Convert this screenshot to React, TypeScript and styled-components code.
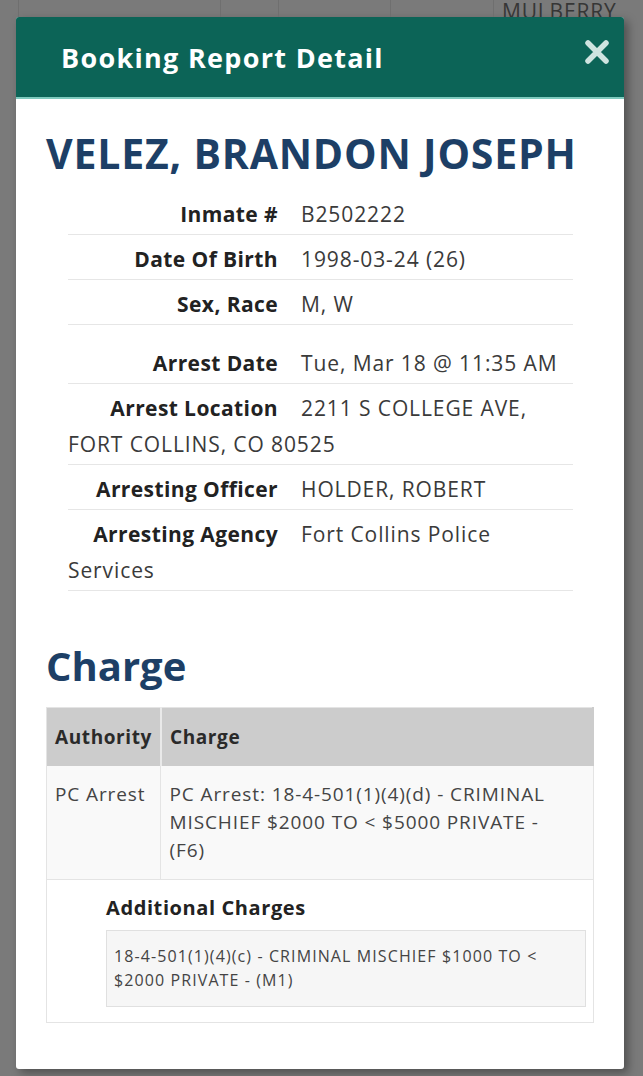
import React from "react";
import styled, { createGlobalStyle } from "styled-components";

const GlobalStyle = createGlobalStyle`
  html, body {
    margin: 0;
    padding: 0;
    background: #7a7a7a;
  }
  body {
    font-family: "Open Sans", "Liberation Sans", sans-serif;
  }
`;

interface IDetailRow {
  label: string;
  value: string;
}

const personRows: IDetailRow[] = [
  { label: "Inmate #", value: "B2502222" },
  { label: "Date Of Birth", value: "1998-03-24 (26)" },
  { label: "Sex, Race", value: "M, W" },
];

const arrestRows: IDetailRow[] = [
  { label: "Arrest Date", value: "Tue, Mar 18 @ 11:35 AM" },
  { label: "Arrest Location", value: "2211 S COLLEGE AVE, FORT COLLINS, CO 80525" },
  { label: "Arresting Officer", value: "HOLDER, ROBERT" },
  { label: "Arresting Agency", value: "Fort Collins Police Services" },
];

const CloseIcon = () => (
  <svg width="26" height="24" viewBox="0 0 26 24" aria-hidden="true">
    <path
      d="M4 3 L22 21 M22 3 L4 21"
      stroke="#cfe4e0"
      strokeWidth="5.5"
      strokeLinecap="round"
    />
  </svg>
);

const App = () => {
  return (
    <Page>
      <GlobalStyle />
      <Backdrop>
        <BackCell $width={19} />
        <BackCell $width={202} />
        <BackCell $width={58} />
        <BackCell $width={112} />
        <BackCell $width={103} />
        <BackCell $width={149}>
          <BackText>MULBERRY</BackText>
        </BackCell>
      </Backdrop>
      <Modal>
        <Header>
          <HeaderTitle>Booking Report Detail</HeaderTitle>
          <CloseButton aria-label="Close">
            <CloseIcon />
          </CloseButton>
        </Header>
        <Body>
          <Name>VELEZ, BRANDON JOSEPH</Name>
          <DetailList>
            {personRows.map((row) => (
              <DetailRow key={row.label}>
                <Label>{row.label}</Label>
                <Value>{row.value}</Value>
              </DetailRow>
            ))}
          </DetailList>
          <DetailList $spaced>
            {arrestRows.map((row) => (
              <DetailRow key={row.label}>
                <Label>{row.label}</Label>
                <Value>{row.value}</Value>
              </DetailRow>
            ))}
          </DetailList>

          <SectionTitle>Charge</SectionTitle>
          <ChargeTable>
            <thead>
              <tr>
                <HeadCell $narrow>Authority</HeadCell>
                <HeadCell>Charge</HeadCell>
              </tr>
            </thead>
            <tbody>
              <tr>
                <BodyCell $narrow>PC Arrest</BodyCell>
                <BodyCell>
                  PC Arrest: 18-4-501(1)(4)(d) - CRIMINAL MISCHIEF $2000 TO &lt; $5000 PRIVATE - (F6)
                </BodyCell>
              </tr>
              <tr>
                <AdditionalCell colSpan={2}>
                  <AdditionalTitle>Additional Charges</AdditionalTitle>
                  <AdditionalBox>
                    18-4-501(1)(4)(c) - CRIMINAL MISCHIEF $1000 TO &lt; $2000 PRIVATE - (M1)
                  </AdditionalBox>
                </AdditionalCell>
              </tr>
            </tbody>
          </ChargeTable>
        </Body>
      </Modal>
    </Page>
  );
};

export default App;

const Page = styled.div`
  width: 643px;
  height: 1076px;
  overflow: hidden;
  background: #7a7a7a;
`;

const Backdrop = styled.div`
  display: flex;
  height: 17px;
  overflow: hidden;
`;

const BackCell = styled.div<{ $width: number }>`
  width: ${(p) => p.$width}px;
  flex-shrink: 0;
  border-right: 1px solid #6f6f6f;
  box-sizing: border-box;
  &:last-child {
    border-right: none;
  }
`;

const BackText = styled.div`
  padding: 0 0 0 8px;
  margin-top: -3px;
  font-size: 21px;
  line-height: 28px;
  color: #363636;
  letter-spacing: 0.8px;
`;

const Modal = styled.div`
  margin-left: 16px;
  width: 608px;
  background: #ffffff;
  border-radius: 3px;
  box-shadow: 4px 4px 10px rgba(0, 0, 0, 0.35);
  padding-bottom: 46px;
`;

const Header = styled.div`
  display: flex;
  align-items: center;
  justify-content: space-between;
  height: 80px;
  padding: 0 14px 0 45px;
  background: #0c6457;
  border-bottom: 2px solid #7fcabe;
  border-radius: 3px 3px 0 0;
`;

const HeaderTitle = styled.h2`
  margin: 0;
  font-size: 27px;
  font-weight: 700;
  letter-spacing: 1.3px;
  color: #ffffff;
`;

const CloseButton = styled.button`
  display: flex;
  padding: 0;
  margin-bottom: 10px;
  border: none;
  background: transparent;
`;

const Body = styled.div`
  padding: 0 30px;
`;

const Name = styled.h1`
  margin: 0;
  padding: 30px 0 13px;
  font-size: 41px;
  line-height: 48px;
  font-weight: 700;
  letter-spacing: 0.8px;
  color: #1d3f66;
`;

const DetailList = styled.div<{ $spaced?: boolean }>`
  margin: ${(p) => (p.$spaced ? "14px" : "0")} 21px 0 22px;
`;

const DetailRow = styled.div`
  padding: 6px 0 2px;
  border-bottom: 1px solid #e6e6e6;
  font-size: 21px;
  line-height: 36px;
  color: #333333;
`;

const Label = styled.span`
  display: inline-block;
  width: 210px;
  margin-right: 23px;
  text-align: right;
  font-weight: 700;
  letter-spacing: 0.4px;
  color: #222222;
`;

const Value = styled.span`
  font-weight: 400;
  letter-spacing: 0.9px;
  color: #3a3a3a;
`;

const SectionTitle = styled.h2`
  margin: 0;
  padding: 51px 0 17px;
  font-size: 40px;
  line-height: 48px;
  font-weight: 700;
  color: #1d3f66;
`;

const ChargeTable = styled.table`
  width: 100%;
  border-collapse: collapse;
  border: 1px solid #e4e4e4;
`;

const HeadCell = styled.th<{ $narrow?: boolean }>`
  width: ${(p) => (p.$narrow ? "113px" : "auto")};
  height: 58px;
  padding: 0 8px;
  box-sizing: border-box;
  background: #cccccc;
  border-right: 2px solid ${(p) => (p.$narrow ? "#e9e9e9" : "#cccccc")};
  text-align: left;
  font-size: 19px;
  font-weight: 700;
  letter-spacing: 0.6px;
  color: #2a2a2a;
`;

const BodyCell = styled.td<{ $narrow?: boolean }>`
  padding: 14px ${(p) => (p.$narrow ? "8px" : "18px")} 15px 8px;
  vertical-align: top;
  background: #f9f9f9;
  border-right: 1px solid #e4e4e4;
  border-bottom: 1px solid #e4e4e4;
  font-size: 19px;
  line-height: 28px;
  letter-spacing: 0.9px;
  color: #444444;
`;

const AdditionalCell = styled.td`
  padding: 13px 7px 15px 59px;
  background: #ffffff;
`;

const AdditionalTitle = styled.div`
  font-size: 20px;
  line-height: 30px;
  font-weight: 700;
  letter-spacing: 0.6px;
  color: #222222;
  margin-bottom: 7px;
`;

const AdditionalBox = styled.div`
  padding: 13px 7px 14px;
  background: #f6f6f6;
  border: 1px solid #e0e0e0;
  font-size: 16px;
  line-height: 24px;
  letter-spacing: 1.1px;
  color: #444444;
`;
